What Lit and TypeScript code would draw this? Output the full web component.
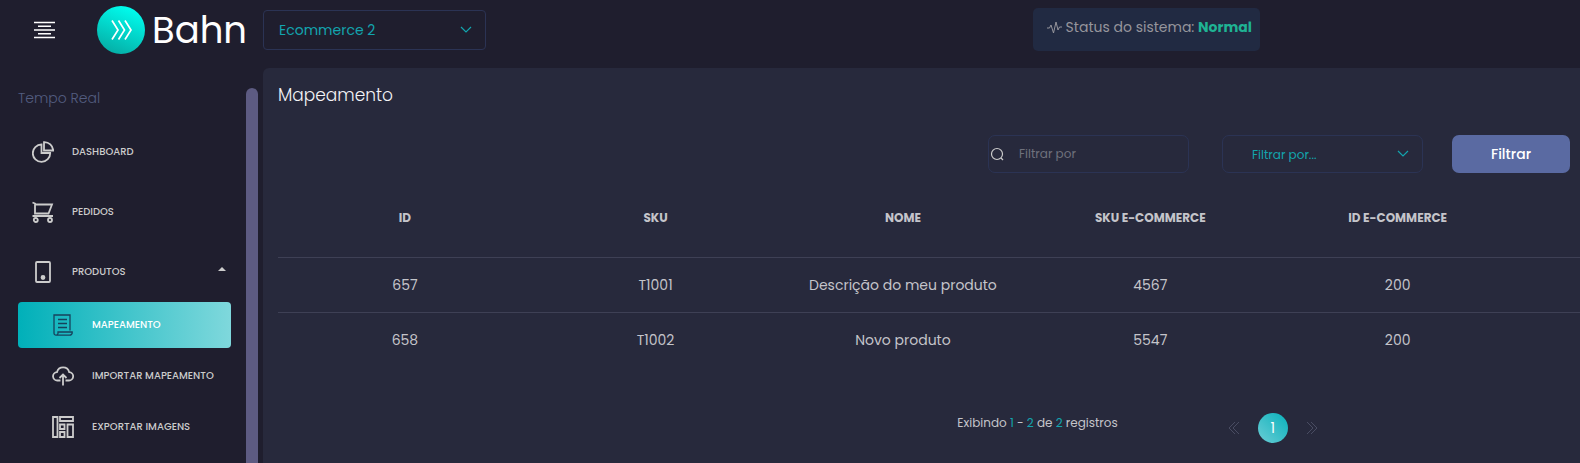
import { LitElement, html, css, svg } from "lit";
import { customElement, state } from "lit/decorators.js";
import { classMap } from "lit/directives/class-map.js";

const icons: Record<string, unknown> = {
  pie: svg`<path d="M9.500 3.500a8.700 8.700 0 1 0 8.700 8.500h-8.700z"/><path d="M12 1.200v8.300h9.200a8.800 8.800 0 0 0-9.200-8.300z"/>`,
  cart: svg`<path d="M.5 1.500l2.500 1v11M3 3.500h17l-3.500 9H3M.5 15h20.500"/><circle cx="3.800" cy="19" r="2"/><circle cx="18" cy="19" r="2"/>`,
  device: svg`<rect x="4" y="1" width="14" height="20" rx="1"/><circle cx="11" cy="16.500" r="1.500" fill="currentColor"/>`,
  scroll: svg`<path d="M4 21.200a2 2 0 0 1-2-2V1h16v15.500M4 21.200h13.500a2.700 2.700 0 0 0 2.700-3.200H6v1.500a2 2 0 0 1-2 1.700z"/><path d="M6 5.500h9M6 9.500h9M6 13.500h9"/>`,
  cloud: svg`<path d="M8.500 15.500H5.500a4.200 4.200 0 0 1-.5-8.400 6.300 6.300 0 0 1 12.200 0 4.200 4.200 0 0 1-.5 8.400H13.500"/><path d="M11 20.500V10M7.500 13l3.500-3.500 3.500 3.500"/>`,
  blocks: svg`<path d="M1 1h4.500v20H1zM8 1h13v4H8zM8 8.500h4.500v4.500H8zM8 16h4.500v5H8zM15.500 8.500H21v12.500h-5.500z"/>`,
};

const icon = (name: string) => html`<svg class="icon" viewBox="0 0 22 22" aria-hidden="true">${icons[name]}</svg>`;
const chevron = html`<svg class="chevron" viewBox="0 0 12 8" aria-hidden="true"><path d="M1 1l5 5 5-5" /></svg>`;

@customElement("app-sidebar")
export class AppSidebar extends LitElement {
  @state() private open = true;

  static styles = css`
    :host { display: flex; gap: 15px; padding-right: 5px; }
    nav { flex: 1; padding: 19px 0 12px 18px; }
    .bar { width: 12px; margin-top: 20px; border-radius: 6px 6px 0 0; background: #5d5b82; }
    h2 { margin: 0 0 13px; font-size: 14px; line-height: 22px; font-weight: 300; color: #535d80; }
    ul { list-style: none; margin: 0; padding: 0; }
    .item {
      box-sizing: border-box; width: 100%; height: 60px; display: flex; align-items: center; gap: 18px;
      padding: 0 5px 0 14px; border: 0; background: none; color: #ccc; font: inherit;
      font-size: 10px; font-weight: 500; text-decoration: none; border-radius: 4px; cursor: pointer;
    }
    .sub .item { height: 46px; padding-left: 34px; }
    .sub li + li { margin-top: 5px; }
    .item.active { background: linear-gradient(90deg, #00b0b9, #7fd8dc); color: #fff; }
    .active .icon { color: #17425c; stroke-width: 1.300; }
    .icon { width: 22px; height: 22px; fill: none; stroke: currentColor; stroke-width: 1.800; }
    .caret { margin: 0 0 6px auto; width: 8px; height: 4px; fill: currentColor; }
  `;

  render() {
    const sub = [
      ["scroll", "MAPEAMENTO"],
      ["cloud", "IMPORTAR MAPEAMENTO"],
      ["blocks", "EXPORTAR IMAGENS"],
    ];
    return html`
      <nav aria-label="Principal">
        <h2>Tempo Real</h2>
        <ul>
          <li><a class="item" href="#dashboard">${icon("pie")}<span>DASHBOARD</span></a></li>
          <li><a class="item" href="#pedidos">${icon("cart")}<span>PEDIDOS</span></a></li>
          <li>
            <button class="item" aria-expanded=${this.open} @click=${() => (this.open = !this.open)}>
              ${icon("device")}<span>PRODUTOS</span>
              <svg class="caret" viewBox="0 0 8 4" aria-hidden="true"><path d="M0 4l4-4 4 4z" /></svg>
            </button>
            ${this.open
              ? html`<ul class="sub">
                  ${sub.map(([i, label], n) => html`<li>
                    <a class=${classMap({ item: true, active: n === 0 })} href="#${i}">${icon(i)}<span>${label}</span></a>
                  </li>`)}
                </ul>`
              : null}
          </li>
        </ul>
      </nav>
      <div class="bar"></div>
    `;
  }
}

@customElement("app-root")
export class AppRoot extends LitElement {
  static styles = css`
    :host {
      display: grid; grid-template-columns: 263px minmax(0, 1fr); grid-template-rows: 68px 1fr;
      min-height: 100vh; background: #1f1e2e; color: #c4c4ca;
      font-family: Poppins, Inter, sans-serif; font-feature-settings: "cv11"; font-size: 14px;
    }
    .brand { display: flex; align-items: center; padding: 0 16px 8px 34px; }
    .burger { border: 0; padding: 0; background: none; color: #fff; height: 18px; margin-right: 42px; cursor: pointer; }
    .burger svg { display: block; width: 21px; height: 18px; stroke: currentColor; stroke-width: 1.600; }
    .logo { display: flex; align-items: center; gap: 7px; color: #fff; text-decoration: none; }
    .logo svg { width: 48px; height: 48px; }
    .logo span { font-size: 37px; line-height: 48px; font-weight: 400; }
    .top { display: flex; align-items: flex-start; justify-content: space-between; padding: 8px 320px 0 0; }
    .select { display: grid; align-items: center; }
    .select > * { grid-area: 1 / 1; }
    .chevron { justify-self: end; width: 12px; height: 8px; margin-right: 14px; fill: none; stroke: #13a5ae; stroke-width: 1.200; pointer-events: none; }
    select, input { box-sizing: border-box; width: 100%; font: inherit; font-feature-settings: inherit; appearance: none; background: transparent; border: 1px solid #2b3354; outline: 0; }
    select { color: #13a5ae; }
    option { background: #27293c; }
    .store { width: 223px; margin-top: 2px; }
    .store select { height: 40px; padding: 0 15px; border-radius: 4px; }
    .status {
      display: flex; align-items: center; gap: 4px; box-sizing: border-box; height: 43px;
      padding: 0 8px 4px 14px; border-radius: 5px; background: #212a42; color: #96959c;
    }
    .status svg { width: 15px; height: 13px; fill: none; stroke: currentColor; }
    .status b { color: #1fb394; font-weight: 700; }
    main { background: #27293c; border-top-left-radius: 6px; padding: 15px 0 0 15px; }
    h1 { margin: 0; font-size: 17px; line-height: 24px; font-weight: 300; color: #f4f4f6; }
    .filters { display: grid; grid-template-columns: 205px 201px 118px; justify-content: end; gap: 29px; margin: 28px 10px 0 0; font-size: 12px; }
    .filters input, .filters select { height: 38px; border-radius: 7px; }
    .search { display: grid; align-items: center; padding-right: 4px; }
    .search > * { grid-area: 1 / 1; }
    .search svg { width: 14px; height: 14px; margin-left: 2px; fill: none; stroke: #ccc; stroke-width: 1.200; pointer-events: none; }
    .search input { padding: 0 10px 0 30px; color: #c4c4ca; }
    input::placeholder { color: #6f717c; opacity: 1; }
    .filters select { padding: 0 30px 0 29px; }
    .go { height: 38px; border: 0; border-radius: 7px; background: #5a6aa2; color: #fff; font: inherit; font-size: 14px; font-weight: 500; cursor: pointer; }
    table { width: 100%; table-layout: fixed; border-collapse: collapse; margin-top: 5px; text-align: center; }
    col { width: 19%; }
    .first { width: 19.5%; }
    .rest { width: 4.5%; }
    th { height: 79px; padding: 0; font-size: 12px; font-weight: 700; }
    td { height: 54px; padding: 0; }
    tbody tr { border-top: 1px solid #3e4055; }
    .foot { display: grid; grid-template-columns: 65% 1fr; column-gap: 110px; align-items: start; padding: 41px 10px 20px 0; }
    .foot p { margin: 7px 0 0; text-align: right; font-size: 12px; line-height: 16px; }
    .foot p b { color: #13a5ae; font-weight: 400; }
    .pages { display: flex; align-items: center; gap: 18px; margin-top: 5px; }
    .pages button { width: 12px; height: 30px; display: grid; place-items: center; border: 0; padding: 0; background: none; color: #494c62; font: inherit; cursor: pointer; }
    .pages button.current { width: 30px; border-radius: 50%; background: linear-gradient(45deg, #6bcdd5, #08b1bb); color: #fff; }
    .pages svg { width: 12px; height: 14px; fill: none; stroke: currentColor; }
  `;

  private rows = [
    ["657", "T1001", "Descrição do meu produto", "4567", "200"],
    ["658", "T1002", "Novo produto", "5547", "200"],
  ];

  render() {
    return html`
      <div class="brand">
        <button class="burger" aria-label="Menu">
          <svg viewBox="0 0 21 18"><path d="M0 1.500h21M4 5.200h13M0 9h21M4 12.800h13M0 16.500h21" /></svg>
        </button>
        <a class="logo" href="#">
          <svg viewBox="0 0 48 48" aria-hidden="true">
            <defs><linearGradient id="g" x1="0.3" y1="1" x2="0.7" y2="0"><stop offset="0" stop-color="#05ada5" /><stop offset="1" stop-color="#00fff0" /></linearGradient></defs>
            <circle cx="24" cy="24" r="24" fill="url(#g)" />
            <path d="M15 14.500l6 9.500-6 9.500M21.500 14.500l6 9.500-6 9.500M28 14.500l6 9.500-6 9.500" fill="none" stroke="#fff" stroke-width="1.700" />
          </svg>
          <span>Bahn</span>
        </a>
      </div>
      <header class="top">
        <div class="select store">
          <select aria-label="Loja"><option>Ecommerce 2</option></select>${chevron}
        </div>
        <div class="status">
          <svg viewBox="0 0 15 13" aria-hidden="true"><path d="M0 7h2.500l1.500-3 2.500 8 2.500-11 2 8 1.500-3H15" /></svg>
          <span>Status do sistema: <b>Normal</b></span>
        </div>
      </header>
      <app-sidebar></app-sidebar>
      <main>
        <h1>Mapeamento</h1>
        <form class="filters" @submit=${(e: Event) => e.preventDefault()}>
          <div class="search">
            <svg viewBox="0 0 14 14" aria-hidden="true"><circle cx="7" cy="7" r="5.500" /><path d="M11 11l2 2" /></svg>
            <input type="text" aria-label="Filtrar por" placeholder="Filtrar por" />
          </div>
          <div class="select">
            <select aria-label="Campo do filtro"><option>Filtrar por...</option></select>${chevron}
          </div>
          <button class="go">Filtrar</button>
        </form>
        <table>
          <colgroup><col class="first" /><col /><col /><col /><col /><col class="rest" /></colgroup>
          <thead>
            <tr>${["ID", "SKU", "NOME", "SKU E-COMMERCE", "ID E-COMMERCE"].map((h) => html`<th scope="col">${h}</th>`)}<td></td></tr>
          </thead>
          <tbody>
            ${this.rows.map((r) => html`<tr>${r.map((c) => html`<td>${c}</td>`)}<td></td></tr>`)}
          </tbody>
        </table>
        <div class="foot">
          <p>Exibindo <b>1</b> - <b>2</b> de <b>2</b> registros</p>
          <div class="pages">
            <button aria-label="Anterior"><svg viewBox="0 0 12 14"><path d="M7 1L1 7l6 6M11 1L5 7l6 6" /></svg></button>
            <button class="current" aria-current="page">1</button>
            <button aria-label="Próxima"><svg viewBox="0 0 12 14"><path d="M5 1l6 6-6 6M1 1l6 6-6 6" /></svg></button>
          </div>
        </div>
      </main>
    `;
  }
}
